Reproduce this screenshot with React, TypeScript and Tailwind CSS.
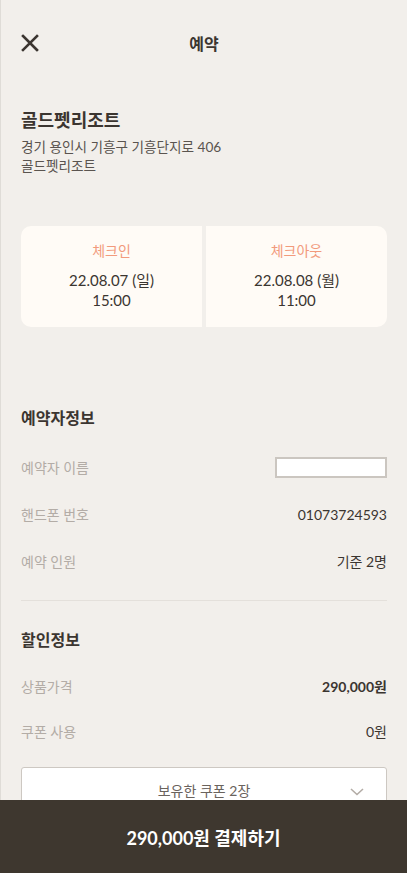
import React from "react";

const rows = [
  { label: "핸드폰 번호", value: "01073724593" },
  { label: "예약 인원", value: "기준 2명" },
];

function CloseIcon() {
  return (
    <svg width="18" height="18" viewBox="0 0 18 18" fill="none">
      <path d="M2 2L16 16M16 2L2 16" stroke="#3b3530" strokeWidth="2.6" strokeLinecap="square" />
    </svg>
  );
}

function Chevron() {
  return (
    <svg width="14" height="8" viewBox="0 0 14 8" fill="none">
      <path d="M1 1L7 6.5L13 1" stroke="#b3aca6" strokeWidth="1.6" />
    </svg>
  );
}

export default function App() {
  return (
    <div
      className="relative min-h-screen border-l border-[#dfdcd7] bg-[#f2efeb] pb-[90px] text-[#3b3530]"
      style={{ fontFamily: "Lato, 'Noto Sans CJK KR', sans-serif" }}
    >
      <header className="relative flex h-[88px] items-center justify-center">
        <button className="absolute left-[20px] top-[34px]">
          <CloseIcon />
        </button>
        <h1 className="text-[16px] font-bold">예약</h1>
      </header>

      <div className="px-[20px]">
        <section className="pt-[18px]">
          <h2 className="text-[18px] leading-[28px] font-bold">골드펫리조트</h2>
          <p className="mt-[4px] text-[13.6px] leading-[19px] text-[#5a544f]">
            경기 용인시 기흥구 기흥단지로 406
            <br />
            골드펫리조트
          </p>
        </section>

        <div className="mt-[50px] grid grid-cols-2 gap-[4px] overflow-hidden rounded-[10px]">
          {[
            { title: "체크인", date: "22.08.07 (일)", time: "15:00" },
            { title: "체크아웃", date: "22.08.08 (월)", time: "11:00" },
          ].map((c) => (
            <div key={c.title} className="flex flex-col items-center bg-[#fffbf6] pt-[15px] pb-[17px]">
              <span className="text-[14px] leading-[20px] text-[#f29a7c]">{c.title}</span>
              <span className="mt-[9px] text-[15px] leading-[20px]">{c.date}</span>
              <span className="text-[15px] leading-[20px]">{c.time}</span>
            </div>
          ))}
        </div>

        <section className="mt-[79px]">
          <h3 className="text-[16px] leading-[24px] font-bold">예약자정보</h3>
          <div className="mt-[14px]">
            <div className="flex h-[47px] items-center justify-between">
              <span className="text-[14px] text-[#b3aca6]">예약자 이름</span>
              <input className="h-[21px] w-[112px] border-2 border-[#cbc6c0] bg-white outline-none" />
            </div>
            {rows.map((r) => (
              <div key={r.label} className="flex h-[47px] items-center justify-between">
                <span className="text-[14px] text-[#b3aca6]">{r.label}</span>
                <span className="text-[14px]">{r.value}</span>
              </div>
            ))}
          </div>
        </section>

        <div className="mt-[15px] h-px bg-[#e4e0db]" />

        <section className="mt-[27px]">
          <h3 className="text-[16px] leading-[24px] font-bold">할인정보</h3>
          <div className="mt-[12px]">
            <div className="flex h-[45px] items-center justify-between">
              <span className="text-[14px] text-[#b3aca6]">상품가격</span>
              <span className="text-[14px] font-bold">290,000원</span>
            </div>
            <div className="flex h-[45px] items-center justify-between">
              <span className="text-[14px] text-[#b3aca6]">쿠폰 사용</span>
              <span className="text-[14px]">0원</span>
            </div>
          </div>
          <button className="relative mt-[13px] flex h-[46px] w-full items-center justify-center rounded-[3px] border border-[#cdc8c2] bg-white">
            <span className="text-[14px] text-[#6a635d]">보유한 쿠폰 2장</span>
            <span className="absolute right-[22px] top-[20px]">
              <Chevron />
            </span>
          </button>
        </section>
      </div>

      <button className="fixed bottom-0 left-0 flex h-[73px] w-full items-center justify-center bg-[#3e372f] pt-[3px]">
        <span className="text-[18px] font-bold text-white">290,000원 결제하기</span>
      </button>
    </div>
  );
}
